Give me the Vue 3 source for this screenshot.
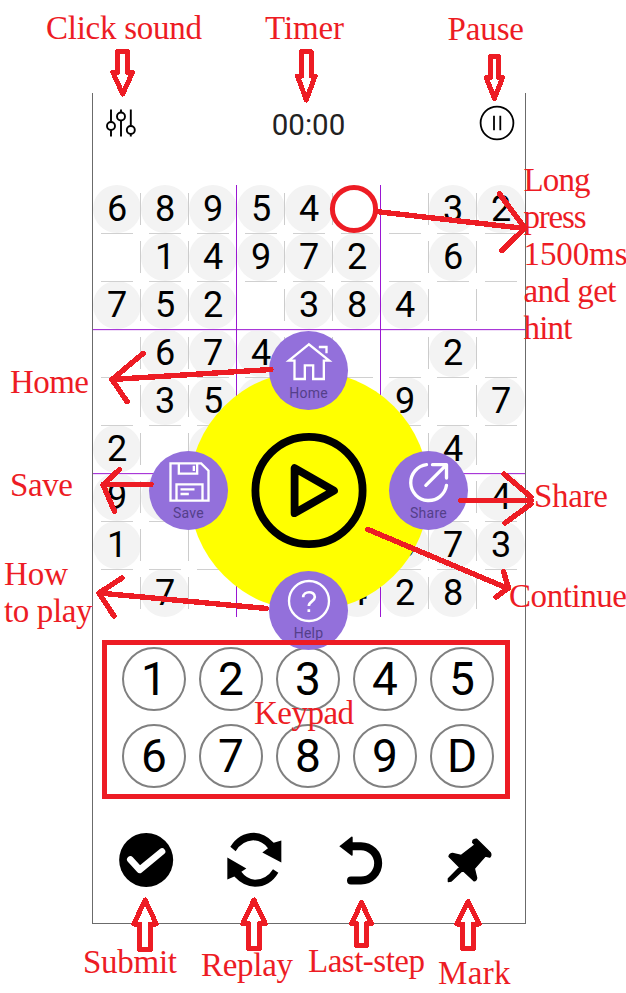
<script setup>
const rows = [
  '689540032',
  '014972060',
  '752038400',
  '067400020',
  '035600907',
  '208000040',
  '950000004',
  '100000673',
  '070004280'
]
const cells = rows.flatMap((row, r) =>
  [...row].map((d, c) => ({
    id: r * 9 + c,
    digit: d === '0' ? '' : d,
    right: c === 8 ? '' : c % 3 === 2 ? 'block-right' : 'tick-right',
    bottom: r === 8 ? '' : r % 3 === 2 ? 'block-bottom' : 'tick-bottom'
  }))
)
const keys = ['1', '2', '3', '4', '5', '6', '7', '8', '9', 'D']

const labels = [
  [46, 39, 'Click sound', 156],
  [265, 39, 'Timer', 79],
  [447.5, 40, 'Pause', 76.5],
  [523.5, 191, 'Long', 67],
  [523.5, 227.5, 'press', 63],
  [523.5, 264.5, '1500ms', 104],
  [523.5, 302, 'and get', 93],
  [523.5, 339, 'hint', 49],
  [10, 393, 'Home', 79],
  [10, 495.5, 'Save', 63],
  [4, 585, 'How', 64],
  [4, 622, 'to play', 88.5],
  [534, 507, 'Share', 74],
  [509, 607, 'Continue', 118],
  [254, 724, 'Keypad', 100],
  [83, 973, 'Submit', 94],
  [201, 976, 'Replay', 92],
  [308, 972, 'Last-step', 117],
  [438, 984, 'Mark', 72.5]
]

// centre x, half shaft, half head, tail y, neck y, tip y
const block = (x, s, h, tail, neck, tip) =>
  `M${x - s} ${tail}H${x + s}V${neck}H${x + h}L${x} ${tip}L${x - h} ${neck}H${x - s}Z`
const blockArrows = [
  block(122.7, 5, 9.8, 51.7, 72.5, 94),
  block(306.3, 4.8, 8.8, 51.7, 76, 100),
  block(494.4, 4, 8.2, 56.5, 77.5, 98.5),
  block(145.1, 5.5, 11.2, 949.5, 924, 900),
  block(254, 5.6, 11.2, 948.5, 923.5, 900),
  block(361.5, 5, 9.8, 945.2, 923.5, 902.5),
  block(468, 5.5, 11.2, 948.5, 924, 901.5)
]
const pointers = [
  'M376 211.5L525 228.5M499.5 194L525 228L502 250.5',
  'M271 369.5L112 379.5M143 353.5L112 379.5L127 401.5',
  'M151 484.3L103 484.8M119.5 469.5L103 484.8L114.5 511.5',
  'M266.5 608.5L99 593M122 578L99 593L114 616',
  'M461 500.5H531M504 474L531 497M505 523L531 504',
  'M368 529.5L508 588.5M503.5 571.5L508.5 588L496 597'
]
</script>

<template>
  <main class="page">
    <section class="phone">
      <header class="topbar">
        <svg class="sliders" viewBox="106 108 30 30">
          <path d="M111 109.5V121.8M111 130.2V136.5M121 109.5V112.3M121 120.7V136.5M130.8 109.5V125.8M130.8 134.2V136.5" />
          <circle cx="111" cy="126" r="4" />
          <circle cx="121" cy="116.5" r="4" />
          <circle cx="130.8" cy="130" r="4" />
        </svg>
        <span class="timer">00:00</span>
        <svg class="pause" viewBox="0 0 36 36">
          <circle cx="18" cy="18" r="16.4" />
          <path d="M15 10.7V25.3M21.3 10.7V25.3" />
        </svg>
      </header>

      <div class="board">
        <div v-for="c in cells" :key="c.id" class="cell" :class="[c.right, c.bottom]">
          <span v-if="c.digit" class="given">{{ c.digit }}</span>
        </div>
      </div>

      <div class="keypad">
        <button v-for="k in keys" :key="k" class="key">{{ k }}</button>
      </div>

      <footer class="toolbar">
        <svg viewBox="150 68.5 162 162">
          <circle cx="228.5" cy="149.5" r="81" />
          <path class="check" d="M181 148L209 179L276 124" />
        </svg>
        <svg viewBox="474 68.5 162 162">
          <path d="M481 110Q507 68 552 68Q585 69 611 98L634 91V157L577 127L594 114Q578 92 550 90Q515 92 497 123Z" />
          <path d="M625 188Q600 230 555 230Q521 229 493 199L472 208V142L529 175L514 185Q530 207 555 209Q590 207 609 177Z" />
        </svg>
        <svg viewBox="108 68.5 162 162">
          <path d="M118 108L155 79Q158 79 158 82V133Q158 138 154 136Z" />
          <path class="bend" d="M152 108H183A51.5 51.5 0 0 1 183 211H153" />
        </svg>
        <svg viewBox="434 68.5 162 162">
          <path class="pin" d="M521 91Q525 86 532 87L573 128Q577 135 571 141L558 138L525 175L532 203Q531 211 524 212L490 180L455 213L447 214V206L481 171L449 139Q451 130 460 130L485 136L527 104L520 97Z" />
        </svg>
      </footer>

      <div class="menu">
        <svg class="play" viewBox="0 0 116 116">
          <circle cx="58" cy="57.5" r="53.6" />
          <path d="M43.6 35.2V80.2L83 57.7Z" />
        </svg>
        <div class="bubble top">
          <svg viewBox="169.5 66 132 120">
            <path d="M235 73L175 122H192V177H223V136H248V177H280V122H296ZM265 81H288V100" />
          </svg>
          <span>Home</span>
        </div>
        <div class="bubble left">
          <svg viewBox="499.5 426 132 120">
            <path d="M510 430H602L624 452V542H510ZM535 430V461H590V430M580 437V453M528 542V493H606V542M540 508H582M540 522H565" />
          </svg>
          <span>Save</span>
        </div>
        <div class="bubble right">
          <svg class="bold" viewBox="529.5 426 132 120">
            <path d="M588 434A54 54 0 1 0 648 496M586 496L646 436M606 434H648V474" />
          </svg>
          <span>Share</span>
        </div>
        <div class="bubble bottom">
          <svg viewBox="589.5 -22 132 120">
            <circle cx="655.5" cy="35" r="60" />
            <path class="mark" d="M638 24C638 4 673 4 673 23C673 36 655 36 655 50M655 60V68" />
          </svg>
          <span>Help</span>
        </div>
      </div>
    </section>

    <svg class="notes" viewBox="0 0 626 993">
      <rect x="104.5" y="642.5" width="403" height="154" />
      <circle cx="354" cy="209" r="21.6" />
      <path v-for="a in blockArrows" :key="a" class="block" :d="a" />
      <path v-for="p in pointers" :key="p" class="pointer" :d="p" />
      <text v-for="l in labels" :key="l[2]" :x="l[0]" :y="l[1]" :textLength="l[3]">{{ l[2] }}</text>
    </svg>
  </main>
</template>

<style>
body {
  background: #fff;
}
</style>

<style scoped>
.page {
  position: relative;
  box-sizing: border-box;
  width: 626px;
  height: 993px;
  padding: 93px 100px 69px 92px;
  overflow: hidden;
  font-family: Roboto, sans-serif;
}
.phone {
  position: relative;
  box-sizing: border-box;
  height: 831px;
  border: 1px solid #6b6b6b;
  border-top: 0;
}
.topbar {
  display: flex;
  align-items: center;
  justify-content: space-between;
  height: 60px;
  padding: 0 10px 0 13px;
  margin-bottom: 32px;
}
.topbar svg {
  fill: none;
  stroke: #000;
}
.sliders {
  width: 30px;
  height: 30px;
  stroke-width: 1.9;
}
.pause {
  width: 36px;
  height: 36px;
  stroke-width: 1.8;
}
.timer {
  padding: 4px 0 0 2px;
  color: #222;
  font-size: 29.5px;
  line-height: 36px;
}
.board {
  display: grid;
  grid-template-columns: repeat(9, 48px);
  grid-auto-rows: 48px;
}
.cell {
  position: relative;
}
.given {
  display: block;
  height: 48px;
  border-radius: 50%;
  background: #f3f3f3;
  color: #000;
  font-size: 36px;
  line-height: 49px;
  text-align: center;
}
.cell::before,
.cell::after {
  position: absolute;
  z-index: 1;
}
.tick-right::before,
.block-right::before {
  content: '';
  top: 8px;
  right: 0;
  width: 1px;
  height: 32px;
  background: #ccc;
}
.tick-bottom::after,
.block-bottom::after {
  content: '';
  bottom: -1px;
  left: 8px;
  width: 32px;
  height: 1px;
  background: #d0d0d0;
}
.block-right::before {
  top: 0;
  height: 48px;
  background: #9a16d2;
}
.block-bottom::after {
  left: 0;
  width: 48px;
  background: #a938d8;
  box-shadow: 0 1px #f0def8;
}
.keypad {
  display: grid;
  grid-template-columns: repeat(5, 64px);
  justify-content: center;
  gap: 13px;
  margin-top: 30px;
  padding-right: 2px;
}
.key {
  box-sizing: border-box;
  height: 64px;
  padding: 0;
  border: 2px solid #808080;
  border-radius: 50%;
  background: #fff;
  color: #000;
  font: 46px/58px Roboto, sans-serif;
  text-align: center;
}
.toolbar {
  display: grid;
  grid-template-columns: repeat(4, 1fr);
  justify-items: center;
  margin-top: 45px;
}
.toolbar svg {
  width: 54px;
  height: 54px;
  overflow: visible;
}
.check,
.bend {
  fill: none;
  stroke: #fff;
  stroke-width: 20;
  stroke-linecap: round;
  stroke-linejoin: round;
}
.bend {
  stroke: #000;
  stroke-width: 24;
}
.pin {
  stroke: #000;
  stroke-width: 4;
  stroke-linejoin: round;
}
.menu {
  position: absolute;
  top: 277.5px;
  left: 95.5px;
  z-index: 2;
  display: flex;
  align-items: center;
  justify-content: center;
  width: 240px;
  height: 240px;
  border-radius: 50%;
  background: #ff0;
}
.play {
  width: 116px;
  height: 116px;
  fill: none;
  stroke: #000;
  stroke-width: 7.8;
  stroke-linejoin: round;
}
.bubble {
  position: absolute;
  box-sizing: border-box;
  display: flex;
  flex-direction: column;
  align-items: center;
  width: 79px;
  height: 79px;
  padding-top: 11px;
  border-radius: 50%;
  background: #9370db;
  color: #543f8a;
  font-size: 14px;
  line-height: 18px;
  letter-spacing: 0.25px;
}
.bubble svg {
  width: 44px;
  height: 40px;
  margin-bottom: 1.5px;
  overflow: visible;
  fill: none;
  stroke: #fff;
  stroke-width: 7;
}
.bubble .bold {
  stroke-width: 10;
  stroke-linecap: round;
  stroke-linejoin: round;
}
.bubble .mark {
  stroke-width: 8;
}
.top {
  top: -39.5px;
  left: 80.5px;
}
.left {
  top: 80.5px;
  left: -39.5px;
}
.right {
  top: 80.5px;
  right: -39.5px;
}
.bottom {
  bottom: -39.5px;
  left: 80.5px;
}
.notes {
  position: absolute;
  inset: 0;
  z-index: 3;
  width: 626px;
  height: 993px;
  fill: none;
  stroke: #ed1c24;
  stroke-width: 5;
  pointer-events: none;
}
.notes circle {
  fill: #fff;
}
.notes .block {
  stroke-width: 5;
  stroke-linejoin: round;
  shape-rendering: crispEdges;
}
.notes .pointer {
  stroke-width: 5.4;
  stroke-linecap: round;
  stroke-linejoin: round;
  shape-rendering: crispEdges;
}
.notes .block {
  fill: #fff;
}
.notes text {
  fill: #ed1c24;
  stroke: none;
  font: 33px 'Liberation Serif', serif;
}
</style>
